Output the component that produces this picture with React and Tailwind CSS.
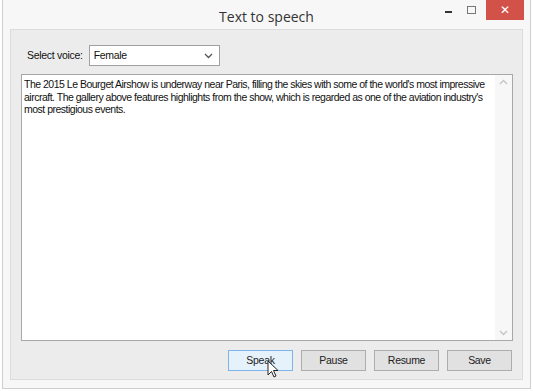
import React from "react";

const Btn = ({ label, hover }) => (
  <div
    className={`w-[65px] h-[21px] flex items-center justify-center text-[10.5px] tracking-[-0.3px] text-[#222] border ${
      hover ? "bg-[#e5f1fb] border-[#7eb4ea]" : "bg-[#e1e1e1] border-[#adadad]"
    }`}
  >
    {label}
  </div>
);

export default function App() {
  return (
    <div
      className="w-[533px] h-[391px] bg-white relative overflow-hidden"
      style={{ fontFamily: '"Liberation Sans", Arial, sans-serif' }}
    >
      <div className="ml-[2px] mr-[2px] h-[389px] border border-[#cfcfcf] border-t-0 bg-[#f7f7f7] flex flex-col">
        {/* title bar */}
        <div className="h-[29px] flex items-start relative">
          <div className="flex-1 text-center pt-[6px] text-[14px] text-[#333]" style={{ fontFamily: '"Open Sans", "Noto Sans", sans-serif' }}>
            Text to speech
          </div>
          <div className="absolute right-[6px] top-0 flex items-start">
            <div className="w-[24px] h-[20px] flex items-center justify-center">
              <div className="w-[7px] h-[2px] bg-[#333] mt-[4px]" />
            </div>
            <div className="w-[22px] h-[20px] flex items-center justify-center">
              <div className="w-[9px] h-[8px] border border-[#777]" />
            </div>
            <div className="w-[38px] h-[20px] bg-[#d2524a] flex items-center justify-center text-white text-[12px] ml-[4px]">
              ✕
            </div>
          </div>
        </div>
        {/* client area */}
        <div className="mx-[7px] h-[351px] bg-[#ececec] border border-[#dcdcdc] flex flex-col">
          <div className="flex items-center pl-[16px] pt-[15px] h-[36px]">
            <span className="text-[10.5px] tracking-[-0.3px] text-[#111]">Select voice:</span>
            <div className="ml-[6px] w-[131px] h-[21px] bg-white border border-[#a0a0a0] flex items-center pl-[4px] pr-[6px]">
              <span className="text-[10.5px] tracking-[-0.3px] text-[#111] flex-1">Female</span>
              <svg width="9" height="6" viewBox="0 0 9 6">
                <path d="M1 1 L4.5 4.5 L8 1" fill="none" stroke="#555" strokeWidth="1.3" />
              </svg>
            </div>
          </div>
          <div className="ml-[10px] mr-[9px] mt-[8px] h-[267px] bg-white border border-[#a8a8a8] flex">
            <div className="flex-1 pl-[2px] pt-[3px] text-[10.5px] tracking-[-0.5px] leading-[12.5px] text-[#111] whitespace-nowrap">
              The 2015 Le Bourget Airshow is underway near Paris, filling the skies with some of the world's most impressive
              <br />
              aircraft. The gallery above features highlights from the show, which is regarded as one of the aviation industry's
              <br />
              most prestigious events.
            </div>
            <div className="w-[17px] bg-[#f7f7f7] flex flex-col justify-between items-center py-[4px]">
              <svg width="9" height="6" viewBox="0 0 9 6">
                <path d="M1 5 L4.5 1.5 L8 5" fill="none" stroke="#c4c4c4" strokeWidth="1.3" />
              </svg>
              <svg width="9" height="6" viewBox="0 0 9 6">
                <path d="M1 1 L4.5 4.5 L8 1" fill="none" stroke="#c4c4c4" strokeWidth="1.3" />
              </svg>
            </div>
          </div>
          <div className="flex justify-end gap-[8px] pr-[10px] mt-[9px]">
            <Btn label="Speak" hover />
            <Btn label="Pause" />
            <Btn label="Resume" />
            <Btn label="Save" />
          </div>
        </div>
      </div>
      {/* mouse cursor */}
      <svg className="absolute left-[267px] top-[360px]" width="12" height="19" viewBox="0 0 12 19">
        <path d="M1 1 L1 15 L4.5 11.5 L7 17 L9 16 L6.5 10.5 L11 10.5 Z" fill="white" stroke="#222" strokeWidth="1" />
      </svg>
    </div>
  );
}
